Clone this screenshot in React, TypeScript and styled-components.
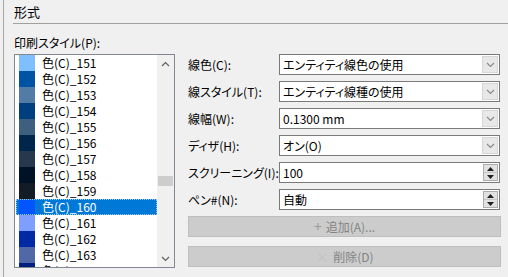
import React from "react";
import styled, { createGlobalStyle } from "styled-components";

const GlobalStyle = createGlobalStyle`
  html, body {
    margin: 0;
    padding: 0;
    background: #f0f0f0;
  }
  body {
    font-family: "Noto Sans CJK JP", "Noto Sans", sans-serif;
    font-size: 12px;
    font-feature-settings: "palt";
    color: #000;
  }
`;

const styles = [
  { name: "色(C)_151", color: "rgb(127,191,255)" },
  { name: "色(C)_152", color: "rgb(0,82,165)" },
  { name: "色(C)_153", color: "rgb(82,124,165)" },
  { name: "色(C)_154", color: "rgb(0,63,127)" },
  { name: "色(C)_155", color: "rgb(63,95,127)" },
  { name: "色(C)_156", color: "rgb(0,38,76)" },
  { name: "色(C)_157", color: "rgb(38,57,76)" },
  { name: "色(C)_158", color: "rgb(0,19,38)" },
  { name: "色(C)_159", color: "rgb(19,28,38)" },
  { name: "色(C)_160", color: "rgb(0,85,255)" },
  { name: "色(C)_161", color: "rgb(127,159,255)" },
  { name: "色(C)_162", color: "rgb(0,41,165)" },
  { name: "色(C)_163", color: "rgb(82,103,165)" },
  { name: "色(C)_164", color: "rgb(0,31,127)" },
];

const selected = "色(C)_160";

const Page = styled.div`
  width: 508px;
  height: 277px;
  display: flex;
  overflow: hidden;
`;

const EdgeStrip = styled.div`
  width: 3px;
  flex: none;
  border-right: 1px solid #a8a8a8;
`;

const Content = styled.div`
  flex: 1;
  padding-left: 9px;
  display: flex;
  flex-direction: column;
`;

const Header = styled.div`
  height: 24px;
  box-sizing: border-box;
  border-bottom: 1px solid #a0a0a0;
  font-size: 13px;
  line-height: 24px;
  padding-left: 1px;
`;

const Caption = styled.div`
  height: 30px;
  line-height: 18px;
  padding-top: 10px;
  box-sizing: border-box;
  padding-left: 1px;
`;

const Main = styled.div`
  display: flex;
  padding-left: 1px;
`;

const ListBox = styled.div`
  width: 161px;
  height: 214px;
  box-sizing: border-box;
  border: 1px solid #828790;
  background: #fff;
  display: flex;
  overflow: hidden;
`;

const Items = styled.div`
  flex: 1;
  overflow: hidden;
  padding-left: 1px;
`;

const Item = styled.div<{ $selected?: boolean }>`
  height: 16px;
  display: flex;
  align-items: center;
  padding-left: 3px;
  line-height: 16px;
  background: ${(p) => (p.$selected ? "#0078d7" : "transparent")};
  color: ${(p) => (p.$selected ? "#fff" : "#000")};
  outline: ${(p) => (p.$selected ? "1px dotted #9ec9ff" : "none")};
  outline-offset: -1px;
`;

const Swatch = styled.span<{ $color: string }>`
  width: 16px;
  height: 16px;
  flex: none;
  background: ${(p) => p.$color};
  margin-right: 7px;
`;

const ScrollBar = styled.div`
  width: 17px;
  flex: none;
  background: #f0f0f0;
  display: flex;
  flex-direction: column;
`;

const ScrollArrow = styled.div`
  height: 17px;
  display: flex;
  align-items: center;
  justify-content: center;
`;

const Track = styled.div`
  flex: 1;
  display: flex;
  flex-direction: column;
`;

const Thumb = styled.div<{ $offset: number }>`
  margin-top: ${(p) => p.$offset}px;
  height: 10px;
  margin-left: 1px;
  margin-right: 1px;
  background: #cdcdcd;
`;

const Form = styled.div`
  margin-left: 13px;
  width: 313px;
  display: flex;
  flex-direction: column;
`;

const FieldGrid = styled.div`
  display: grid;
  grid-template-columns: 91px 221px;
  row-gap: 6px;
`;

const Label = styled.div`
  height: 21px;
  line-height: 21px;
  white-space: nowrap;
`;

const Field = styled.div`
  height: 21px;
  box-sizing: border-box;
  border: 1px solid #7a7a7a;
  background: #fff;
  display: flex;
  align-items: stretch;
`;

const FieldText = styled.div`
  flex: 1;
  padding-left: 3px;
  line-height: 19px;
  white-space: nowrap;
`;

const DropButton = styled.div`
  width: 16px;
  margin: 1px;
  background: #e8e8e8;
  border: 1px solid #d6d6d6;
  box-sizing: border-box;
  display: flex;
  align-items: center;
  justify-content: center;
`;

const Spin = styled.div`
  width: 15px;
  margin: 1px 1px 1px 0;
  border: 1px solid #adadad;
  background: #e1e1e1;
  box-sizing: border-box;
  display: flex;
  flex-direction: column;
`;

const SpinHalf = styled.div<{ $top?: boolean }>`
  flex: 1;
  display: flex;
  align-items: center;
  justify-content: center;
  border-bottom: ${(p) => (p.$top ? "1px solid #c4c4c4" : "none")};
`;

const Buttons = styled.div`
  display: flex;
  flex-direction: column;
  gap: 9px;
  margin-top: 6px;
`;

const DisabledButton = styled.div`
  height: 21px;
  box-sizing: border-box;
  border: 1px solid #bfbfbf;
  background: #cccccc;
  color: #838383;
  display: flex;
  align-items: center;
  justify-content: center;
  line-height: 19px;
`;

const ButtonGlyph = styled.span<{ $faint?: boolean }>`
  color: ${(p) => (p.$faint ? "#c4c4c4" : "#9a9a9a")};
  font-size: 14px;
  margin-right: 4px;
`;

const Chevron: React.FC<{ up?: boolean; color?: string }> = ({ up, color = "#606060" }) => (
  <svg width="9" height="6" viewBox="0 0 9 6">
    <path
      d={up ? "M1 5 L4.5 1.5 L8 5" : "M1 1 L4.5 4.5 L8 1"}
      fill="none"
      stroke={color}
      strokeWidth="1.2"
    />
  </svg>
);

const Triangle: React.FC<{ up?: boolean }> = ({ up }) => (
  <svg width="7" height="4" viewBox="0 0 7 4">
    <path d={up ? "M0 4 L3.5 0 L7 4 Z" : "M0 0 L3.5 4 L7 0 Z"} fill="#202020" />
  </svg>
);

const fields = [
  { label: "線色(C):", value: "エンティティ線色の使用", kind: "drop" },
  { label: "線スタイル(T):", value: "エンティティ線種の使用", kind: "drop" },
  { label: "線幅(W):", value: "0.1300 mm", kind: "drop" },
  { label: "ディザ(H):", value: "オン(O)", kind: "drop" },
  { label: "スクリーニング(I):", value: "100", kind: "spin" },
  { label: "ペン#(N):", value: "自動", kind: "spin" },
];

const App: React.FC = () => {
  return (
    <>
      <GlobalStyle />
      <Page>
        <EdgeStrip />
        <Content>
          <Header>形式</Header>
          <Caption>印刷スタイル(P):</Caption>
          <Main>
            <ListBox>
              <Items>
                {styles.map(({ name, color }) => (
                  <Item key={name} $selected={name === selected}>
                    <Swatch $color={color} />
                    {name}
                  </Item>
                ))}
              </Items>
              <ScrollBar>
                <ScrollArrow>
                  <Chevron up />
                </ScrollArrow>
                <Track>
                  <Thumb $offset={104} />
                </Track>
                <ScrollArrow>
                  <Chevron />
                </ScrollArrow>
              </ScrollBar>
            </ListBox>
            <Form>
              <FieldGrid>
                {fields.map(({ label, value, kind }) => (
                  <React.Fragment key={label}>
                    <Label>{label}</Label>
                    <Field>
                      <FieldText>{value}</FieldText>
                      {kind === "drop" ? (
                        <DropButton>
                          <Chevron color="#8a8a8a" />
                        </DropButton>
                      ) : (
                        <Spin>
                          <SpinHalf $top>
                            <Triangle up />
                          </SpinHalf>
                          <SpinHalf>
                            <Triangle />
                          </SpinHalf>
                        </Spin>
                      )}
                    </Field>
                  </React.Fragment>
                ))}
              </FieldGrid>
              <Buttons>
                <DisabledButton>
                  <ButtonGlyph>+</ButtonGlyph>追加(A)...
                </DisabledButton>
                <DisabledButton>
                  <ButtonGlyph $faint>×</ButtonGlyph>削除(D)
                </DisabledButton>
              </Buttons>
            </Form>
          </Main>
        </Content>
      </Page>
    </>
  );
};

export default App;
